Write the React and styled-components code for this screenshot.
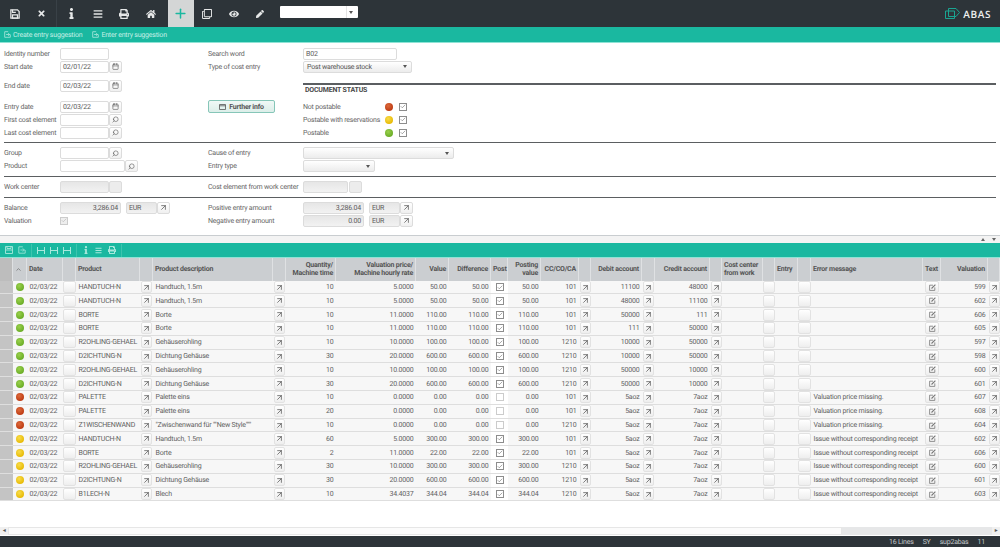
import React from "react";
import styled, { createGlobalStyle } from "styled-components";
import { ArrowUpRight, Check, Plus, Search, Calendar, ChevronUp } from "lucide-react";
import { FaHome, FaInfo, FaPrint, FaEye, FaPen, FaTimes, FaBars, FaRegClone } from "react-icons/fa";

const GlobalStyle = createGlobalStyle`
  html, body { margin: 0; padding: 0; background: #fff; }
  body {
    font-family: Roboto, "Open Sans", sans-serif;
    font-size: 7px;
    letter-spacing: -0.2px;
    text-rendering: geometricPrecision;
    color: #5a5a5a;
  }
  * { box-sizing: border-box; }
`;

const Page = styled.div`
  width: 1000px;
  height: 547px;
  display: flex;
  flex-direction: column;
  overflow: hidden;
`;

// top bar
const TopBar = styled.div`
  height: 27px;
  flex: none;
  background: #2d3439;
  display: flex;
  align-items: stretch;
  padding-left: 1px;
`;
const ToolBtn = styled.div`
  width: ${(p) => p.$w || 26.6}px;
  margin-left: ${(p) => p.$ml || 0}px;
  display: flex;
  align-items: center;
  justify-content: center;
  color: ${(p) => (p.$active ? "#1ab8a0" : "#e6e8e8")};
  background: ${(p) => (p.$active ? "#d4d6d6" : "transparent")};
`;
const ToolSep = styled.div`
  width: 1px;
  margin: 0 1px;
  background: #394147;
`;
const TopSelect = styled.div`
  width: 78px;
  height: 12px;
  margin: 6px 0 0 6.5px;
  background: #fff;
  border-radius: 1px;
  display: flex;
  justify-content: flex-end;
  align-items: center;
  padding-right: 3px;
`;
const TopSelectBtn = styled.span`
  width: 9px;
  height: 100%;
  display: flex;
  align-items: center;
  justify-content: center;
  border-left: 1px solid #e4e4e4;
`;
const Caret = styled.span`
  width: 0;
  height: 0;
  border-left: 2px solid transparent;
  border-right: 2px solid transparent;
  border-top: 3px solid #555;
  margin-right: 1px;
`;
const Logo = styled.div`
  margin-left: auto;
  margin-right: 9px;
  display: flex;
  align-items: center;
  gap: 3px;
  color: #eef0f0;
  font-family: "Open Sans", sans-serif;
  font-size: 10px;
  font-weight: 600;
  letter-spacing: 0.6px;
`;

const TealBar = styled.div`
  height: 16px;
  flex: none;
  background: #1ab8a0;
  border-bottom: 1px solid #8fe3d5;
  display: flex;
  align-items: center;
  padding-left: 4px;
  gap: 10px;
`;
const BarLink = styled.span`
  display: flex;
  align-items: center;
  gap: 2px;
  color: #c4efe6;
`;

// form
const Form = styled.div`
  flex: none;
  height: 193px;
  padding: 4px 4px 0;
  border-bottom: 1px solid #c9cdd0;
`;
const Columns = styled.div`
  display: grid;
  grid-template-columns: 204px 1fr;
`;
const Stack = styled.div`
  display: flex;
  flex-direction: column;
`;
const Row = styled.div`
  display: flex;
  align-items: center;
  height: ${(p) => p.$h || 13}px;
  margin-top: ${(p) => p.$mt || 0}px;
`;
const Label = styled.span`
  width: ${(p) => p.$w || 56}px;
  padding-left: ${(p) => p.$indent || 0}px;
  flex: none;
  white-space: nowrap;
  color: #666;
`;
const Input = styled.div`
  width: ${(p) => p.$w || 49}px;
  height: 12px;
  flex: none;
  padding: 0 2px;
  line-height: 10px;
  border: 1px solid #dcdcdc;
  border-radius: 2px;
  text-align: ${(p) => (p.$right ? "right" : "left")};
  margin-right: ${(p) => p.$mr || 0}px;
  background: ${(p) => (p.$off ? "linear-gradient(#e6e6e6, #f2f2f2)" : "#fff")};
`;
const Side = styled.div`
  width: 13px;
  height: 12px;
  flex: none;
  display: flex;
  align-items: center;
  justify-content: center;
  border: 1px solid #dcdcdc;
  border-radius: 2px;
  color: #555;
  background: ${(p) => (p.$off ? "#ececec" : "linear-gradient(#fff, #f0f0f0)")};
`;
const Lens = styled(Search)`
  transform: scaleX(-1);
`;
const Select = styled.div`
  width: ${(p) => p.$w}px;
  height: 12px;
  flex: none;
  display: flex;
  align-items: center;
  justify-content: space-between;
  padding: 0 3px;
  border: 1px solid #dcdcdc;
  border-radius: 2px;
  color: #555;
  background: linear-gradient(#fff, #ececec);
`;
const Rule = styled.div`
  height: 1px;
  background: #5b5e61;
  margin: ${(p) => p.$m || "3px 0 4px"};
`;
const HeavyRule = styled(Rule)`
  height: 2px;
  margin: 0 0 0 95px;
`;
const StatusTitle = styled.div`
  margin: 1px 0 5px 97px;
  height: 9px;
  font-weight: 700;
  line-height: 9px;
  color: #4a4a4a;
`;
const FurtherInfo = styled.div`
  width: 67px;
  height: 13px;
  flex: none;
  margin-right: 28px;
  display: flex;
  align-items: center;
  justify-content: center;
  gap: 3px;
  font-weight: 700;
  color: #555;
  background: linear-gradient(#f0f8f6, #dceee9);
  border: 1px solid #86c6b8;
  border-radius: 2px;
`;
const DOTS = {
  red: ["#dc6a3c", "#bf3d14"],
  yellow: ["#f8dc4a", "#e8bb08"],
  green: ["#9ad04c", "#6cae28"],
};
const Dot = styled.span`
  width: 8px;
  height: 8px;
  border-radius: 50%;
  flex: none;
  display: block;
  background: radial-gradient(circle at 40% 35%, ${(p) => DOTS[p.$c][0]}, ${(p) => DOTS[p.$c][1]} 70%);
`;
const Box = styled.span`
  width: 8px;
  height: 8px;
  flex: none;
  display: flex;
  align-items: center;
  justify-content: center;
  border: 1px solid ${(p) => (p.$off ? "#ccc" : "#8d8d8d")};
  background: ${(p) => (p.$off ? "#eee" : "#fff")};
  color: ${(p) => (p.$off ? "#aaa" : "#555")};
  margin-left: ${(p) => p.$ml || 0}px;
`;
const EmptyBox = styled(Box)`
  border-color: #ccc;
`;
const Ticked = ({ off, ml }) => (
  <Box $off={off} $ml={ml}>
    <Check size={7} strokeWidth={2} />
  </Box>
);

const Splitter = styled.div`
  height: 7px;
  flex: none;
  background: #f3f3f3;
  display: flex;
  justify-content: flex-end;
  align-items: center;
  gap: 7px;
  padding-right: 4px;
`;
const SmallUp = styled.span`
  border-left: 2px solid transparent;
  border-right: 2px solid transparent;
  border-bottom: 3px solid #666;
`;
const SmallDown = styled.span`
  border-left: 2px solid transparent;
  border-right: 2px solid transparent;
  border-top: 3px solid #666;
`;

const TableBar = styled(TealBar)`
  height: 15px;
  gap: 0;
  padding-left: 2px;
  color: #a8e8dc;
`;
const BarIcon = styled.span`
  width: 13px;
  display: flex;
  justify-content: center;
  align-items: center;
`;
const BarSep = styled.span`
  width: 1px;
  height: 13px;
  margin: 0 2.5px;
  background: #3cc4ae;
`;

// table
const TEMPLATE =
  "13px 14px 36px 13px 64px 13px 120px 13px 50px 80px 33px 42px 17px 33px 38px 12px 51px 13px 55px 12px 41px 12px 23px 13px 112px 18px 47px 12px";

const TableArea = styled.div`
  flex: 1;
  min-height: 0;
  background: #fff;
`;
const HeadRow = styled.div`
  display: grid;
  grid-template-columns: ${TEMPLATE};
  height: 22.7px;
  background: #cbced1;
`;
const HeadCell = styled.div`
  display: flex;
  align-items: center;
  justify-content: ${(p) => (p.$right ? "flex-end" : "flex-start")};
  text-align: ${(p) => (p.$right ? "right" : "left")};
  padding: 0 2px;
  font-weight: 700;
  line-height: 8.6px;
  color: #555;
  white-space: pre;
  border-right: 1px solid #dfe1e3;
  background: ${(p) => (p.$stub ? "#bdbdbd" : "transparent")};
`;
const DataRow = styled.div`
  display: grid;
  grid-template-columns: ${TEMPLATE};
  height: 13.8px;
`;
const Cell = styled.div`
  display: flex;
  align-items: center;
  justify-content: ${(p) => (p.$right ? "flex-end" : p.$center ? "center" : "flex-start")};
  padding: 0 ${(p) => (p.$center ? 0 : 2.5)}px;
  white-space: nowrap;
  overflow: hidden;
  border-bottom: 1px solid #dedede;
  background: ${(p) => (p.$stub ? "#c4c4c4" : p.$white ? "#fff" : "#f7f7f7")};
  color: #5f5f5f;
`;
const CellBtn = styled.span`
  width: 11px;
  height: 12px;
  display: flex;
  align-items: center;
  justify-content: center;
  border: 1px solid #e2e2e2;
  border-radius: 2px;
  background: linear-gradient(#fff, #eee);
  color: #444;
`;
const Blank = styled(CellBtn)`
  width: 100%;
`;
const TextBtn = styled(CellBtn)`
  width: 14px;
  color: #777;
`;

const Scroll = styled.div`
  height: 8px;
  flex: none;
  margin-bottom: 1px;
  display: grid;
  grid-template-columns: 8px 834px 1fr 8px;
  background: #f6f6f6;
`;
const ScrollEnd = styled.div`
  display: flex;
  align-items: center;
  justify-content: center;
  background: #f0f0f0;
  color: #555;
  font-size: 5px;
`;
const ScrollThumb = styled.div`
  background: #fbfbfb;
  border: 1px solid #e6e6e6;
`;
const ScrollTrack = styled.div`
  background: #e6e7e8;
`;
const StatusBar = styled.div`
  height: 11px;
  flex: none;
  background: #2d3439;
  display: flex;
  align-items: center;
  justify-content: flex-end;
  color: #c4c8ca;
  gap: 9px;
  padding-right: 15px;
`;

const Arrow = () => (
  <CellBtn>
    <ArrowUpRight size={9} strokeWidth={1.8} />
  </CellBtn>
);

const SaveIcon = () => (
  <svg width="10" height="10" viewBox="0 0 12 12" fill="none" stroke="currentColor" strokeWidth="1.5">
    <path d="M1 1h8l2 2v8H1z" />
    <path d="M3 7h6v4H3zM3 1v3h4" />
  </svg>
);
const CopyBox = ({ size = 7 }) => (
  <svg width={size} height={size} viewBox="0 0 10 10" fill="none" stroke="currentColor" strokeWidth="1">
    <path d="M6 1H1v8h8V5" />
    <path d="M3 5h5M6 3l2 2-2 2" />
  </svg>
);
const Measure = () => (
  <svg width="8" height="7" viewBox="0 0 8 7" fill="none" stroke="currentColor" strokeWidth="1">
    <path d="M.5 0v7M7.5 0v7M1 3.5h6" />
  </svg>
);
const Floppy = () => (
  <svg width="8" height="8" viewBox="0 0 8 8" fill="none" stroke="currentColor" strokeWidth="0.9">
    <path d="M.5.5h7v7h-7zM.5 4h7M2 .5v2h4v-2" />
  </svg>
);
const WindowIcon = () => (
  <svg width="7" height="6" viewBox="0 0 7 6" fill="none" stroke="#555" strokeWidth="0.8">
    <path d="M.5.5h6v5h-6zM.5 1.8h6" />
  </svg>
);
const NoteIcon = () => (
  <svg width="7" height="7" viewBox="0 0 7 7" fill="none" stroke="currentColor" strokeWidth="0.8">
    <path d="M4 1.2H.6v5.2h5.2V3.4" />
    <path d="M2.5 4.5 6.4.6" strokeWidth="1.1" />
  </svg>
);
const AbasMark = () => (
  <svg width="15" height="11" viewBox="0 0 15 11" fill="none" stroke="#1aa592" strokeWidth="1">
    <path d="M.5 3h9v7.5h-9zM3.5.5h7.5l3.5 4-3.5 4h-7.5z" />
  </svg>
);

// field / column layout of the table
const COLS = [
  { id: "stub" },
  { id: "dot", head: "" },
  { id: "date", head: "Date" },
  { id: "pick" },
  { id: "product", head: "Product" },
  { id: "arrow" },
  { id: "desc", head: "Product description" },
  { id: "arrow" },
  { id: "qty", head: "Quantity/\nMachine time", right: true },
  { id: "price", head: "Valuation price/\nMachine hourly rate", right: true },
  { id: "value", head: "Value", right: true },
  { id: "diff", head: "Difference", right: true },
  { id: "post", head: "Post" },
  { id: "posting", head: "Posting\nvalue", right: true },
  { id: "cc", head: "CC/CO/CA", right: true },
  { id: "arrow" },
  { id: "debit", head: "Debit account", right: true },
  { id: "arrow" },
  { id: "credit", head: "Credit account", right: true },
  { id: "arrow" },
  { id: "center", head: "Cost center\nfrom work" },
  { id: "pick" },
  { id: "entry", head: "Entry" },
  { id: "pick" },
  { id: "error", head: "Error message" },
  { id: "text", head: "Text" },
  { id: "valuation", head: "Valuation", right: true },
  { id: "arrow" },
];

const HT = ["HANDTUCH-N", "Handtuch, 1.5m"];
const BO = ["BORTE", "Borte"];
const RO = ["R2OHLING-GEHAEL", "Gehäuserohling"];
const DI = ["D2ICHTUNG-N", "Dichtung Gehäuse"];
const PA = ["PALETTE", "Palette eins"];
const MISSING = "Valuation price missing.";
const ISSUE = "Issue without corresponding receipt";

const mk = (dot, [product, desc], qty, price, value, on, cc, debit, credit, error, valuation) => ({
  dot, product, desc, qty, price, value, on, cc, debit, credit, error, valuation,
});

const ROWS = [
  mk("green", HT, "10", "5.0000", "50.00", true, "101", "11100", "48000", "", "599"),
  mk("green", HT, "10", "5.0000", "50.00", true, "101", "48000", "11100", "", "602"),
  mk("green", BO, "10", "11.0000", "110.00", true, "101", "50000", "111", "", "606"),
  mk("green", BO, "10", "11.0000", "110.00", true, "101", "111", "50000", "", "605"),
  mk("green", RO, "10", "10.0000", "100.00", true, "1210", "10000", "50000", "", "597"),
  mk("green", DI, "30", "20.0000", "600.00", true, "1210", "10000", "50000", "", "598"),
  mk("green", RO, "10", "10.0000", "100.00", true, "1210", "50000", "10000", "", "600"),
  mk("green", DI, "30", "20.0000", "600.00", true, "1210", "50000", "10000", "", "601"),
  mk("red", PA, "10", "0.0000", "0.00", false, "101", "5aoz", "7aoz", MISSING, "607"),
  mk("red", PA, "20", "0.0000", "0.00", false, "101", "5aoz", "7aoz", MISSING, "608"),
  mk("red", ["Z1WISCHENWAND", '"Zwischenwand für ""New Style"""'], "10", "0.0000", "0.00", false, "1210", "5aoz", "7aoz", MISSING, "604"),
  mk("yellow", HT, "60", "5.0000", "300.00", true, "101", "5aoz", "7aoz", ISSUE, "602"),
  mk("yellow", BO, "2", "11.0000", "22.00", true, "101", "5aoz", "7aoz", ISSUE, "606"),
  mk("yellow", RO, "30", "10.0000", "300.00", true, "1210", "5aoz", "7aoz", ISSUE, "600"),
  mk("yellow", DI, "30", "20.0000", "600.00", true, "1210", "5aoz", "7aoz", ISSUE, "601"),
  mk("yellow", ["B1LECH-N", "Blech"], "10", "34.4037", "344.04", true, "1210", "5aoz", "7aoz", ISSUE, "603"),
];

const cellValue = (col, row) => {
  switch (col.id) {
    case "date":
      return "02/03/22";
    case "diff":
    case "posting":
      return row.value;
    default:
      return row[col.id];
  }
};

function TableCell({ col, row }) {
  if (col.id === "stub") return <Cell $stub />;
  if (col.id === "dot")
    return (
      <Cell $center>
        <Dot $c={row.dot} />
      </Cell>
    );
  if (col.id === "pick")
    return (
      <Cell $center>
        <Blank />
      </Cell>
    );
  if (col.id === "arrow")
    return (
      <Cell $center>
        <Arrow />
      </Cell>
    );
  if (col.id === "post")
    return (
      <Cell $center $white>
        {row.on ? <Ticked /> : <EmptyBox />}
      </Cell>
    );
  if (col.id === "text")
    return (
      <Cell $center>
        <TextBtn>
          <NoteIcon />
        </TextBtn>
      </Cell>
    );
  return <Cell $right={col.right}>{cellValue(col, row)}</Cell>;
}

export default function App() {
  return (
    <Page>
      <GlobalStyle />
      <TopBar>
        <ToolBtn $w={27}><SaveIcon /></ToolBtn>
        <ToolBtn $w={27}><FaTimes size={9} /></ToolBtn>
        <ToolSep />
        <ToolBtn><FaInfo size={11} /></ToolBtn>
        <ToolBtn><FaBars size={10} /></ToolBtn>
        <ToolBtn><FaPrint size={10} /></ToolBtn>
        <ToolBtn><FaHome size={10} /></ToolBtn>
        <ToolBtn $active $w={26} $ml={3.6}><Plus size={15} strokeWidth={2.4} /></ToolBtn>
        <ToolBtn><FaRegClone size={10} /></ToolBtn>
        <ToolBtn><FaEye size={10} /></ToolBtn>
        <ToolBtn><FaPen size={8} /></ToolBtn>
        <TopSelect><TopSelectBtn><Caret /></TopSelectBtn></TopSelect>
        <Logo>
          <AbasMark />
          ABAS
        </Logo>
      </TopBar>
      <TealBar>
        <BarLink><CopyBox />Create entry suggestion</BarLink>
        <BarLink><CopyBox />Enter entry suggestion</BarLink>
      </TealBar>

      <Form>
        <Columns>
          <Stack>
            <Row><Label>Identity number</Label><Input /></Row>
            <Row><Label>Start date</Label><Input>02/01/22</Input><Side><Calendar size={7} /></Side></Row>
            <Row $mt={6}><Label>End date</Label><Input>02/03/22</Input><Side><Calendar size={7} /></Side></Row>
            <Row $mt={8}><Label>Entry date</Label><Input>02/03/22</Input><Side><Calendar size={7} /></Side></Row>
            <Row><Label>First cost element</Label><Input /><Side><Lens size={7} /></Side></Row>
            <Row><Label>Last cost element</Label><Input /><Side><Lens size={7} /></Side></Row>
          </Stack>
          <Stack>
            <Row><Label $w={95}>Search word</Label><Input $w={94}>B02</Input></Row>
            <Row>
              <Label $w={95}>Type of cost entry</Label>
              <Select $w={109}>Post warehouse stock<Caret /></Select>
            </Row>
            <Row $h={10} />
            <HeavyRule />
            <StatusTitle>DOCUMENT STATUS</StatusTitle>
            <Row>
              <FurtherInfo><WindowIcon />Further info</FurtherInfo>
              <Label $w={82}>Not postable</Label>
              <Dot $c="red" />
              <Ticked ml={6} />
            </Row>
            <Row>
              <Label $w={177} $indent={95}>Postable with reservations</Label>
              <Dot $c="yellow" />
              <Ticked ml={6} />
            </Row>
            <Row>
              <Label $w={177} $indent={95}>Postable</Label>
              <Dot $c="green" />
              <Ticked ml={6} />
            </Row>
          </Stack>
        </Columns>
        <Rule $m="2.5px 0 4px" />
        <Columns>
          <Stack>
            <Row><Label>Group</Label><Input /><Side><Lens size={7} /></Side></Row>
            <Row><Label>Product</Label><Input $w={65} /><Side><Lens size={7} /></Side></Row>
          </Stack>
          <Stack>
            <Row><Label $w={95}>Cause of entry</Label><Select $w={151}><span /><Caret /></Select></Row>
            <Row><Label $w={95}>Entry type</Label><Select $w={72}><span /><Caret /></Select></Row>
          </Stack>
        </Columns>
        <Rule />
        <Columns>
          <Stack>
            <Row><Label>Work center</Label><Input $off /><Side $off /></Row>
          </Stack>
          <Stack>
            <Row><Label $w={95}>Cost element from work center</Label><Input $off $w={45} $mr={1} /><Side $off /></Row>
          </Stack>
        </Columns>
        <Rule $m="3px 0 3.5px" />
        <Columns>
          <Stack>
            <Row>
              <Label>Balance</Label>
              <Input $off $right $w={61} $mr={5}>3,286.04</Input>
              <Input $off $w={31}>EUR</Input>
              <Side><ArrowUpRight size={9} /></Side>
            </Row>
            <Row>
              <Label>Valuation</Label>
              <Ticked off />
            </Row>
          </Stack>
          <Stack>
            <Row>
              <Label $w={95}>Positive entry amount</Label>
              <Input $off $right $w={61} $mr={5}>3,286.04</Input>
              <Input $off $w={31}>EUR</Input>
              <Side><ArrowUpRight size={9} /></Side>
            </Row>
            <Row>
              <Label $w={95}>Negative entry amount</Label>
              <Input $off $right $w={61} $mr={5}>0.00</Input>
              <Input $off $w={31}>EUR</Input>
              <Side><ArrowUpRight size={9} /></Side>
            </Row>
          </Stack>
        </Columns>
      </Form>

      <Splitter><SmallUp /><SmallDown /></Splitter>
      <TableBar>
        <BarIcon><Floppy /></BarIcon>
        <BarIcon><CopyBox size={8} /></BarIcon>
        <BarSep />
        <BarIcon><Measure /></BarIcon>
        <BarIcon><Measure /></BarIcon>
        <BarIcon><Measure /></BarIcon>
        <BarSep />
        <BarIcon><FaInfo size={8} /></BarIcon>
        <BarIcon><FaBars size={7} /></BarIcon>
        <BarIcon><FaPrint size={8} /></BarIcon>
        <BarSep />
      </TableBar>

      <TableArea>
        <HeadRow>
          {COLS.map((col, i) => (
            <HeadCell key={i} $stub={col.id === "stub"} $right={col.right}>
              {col.id === "dot" ? <ChevronUp size={7} /> : col.head}
            </HeadCell>
          ))}
        </HeadRow>
        {ROWS.map((row, r) => (
          <DataRow key={r}>
            {COLS.map((col, i) => (
              <TableCell key={i} col={col} row={row} />
            ))}
          </DataRow>
        ))}
      </TableArea>

      <Scroll>
        <ScrollEnd>◄</ScrollEnd>
        <ScrollThumb />
        <ScrollTrack />
        <ScrollEnd>►</ScrollEnd>
      </Scroll>
      <StatusBar>
        <span>16 Lines</span>
        <span>SY</span>
        <span>sup2abas</span>
        <span>11</span>
      </StatusBar>
    </Page>
  );
}
